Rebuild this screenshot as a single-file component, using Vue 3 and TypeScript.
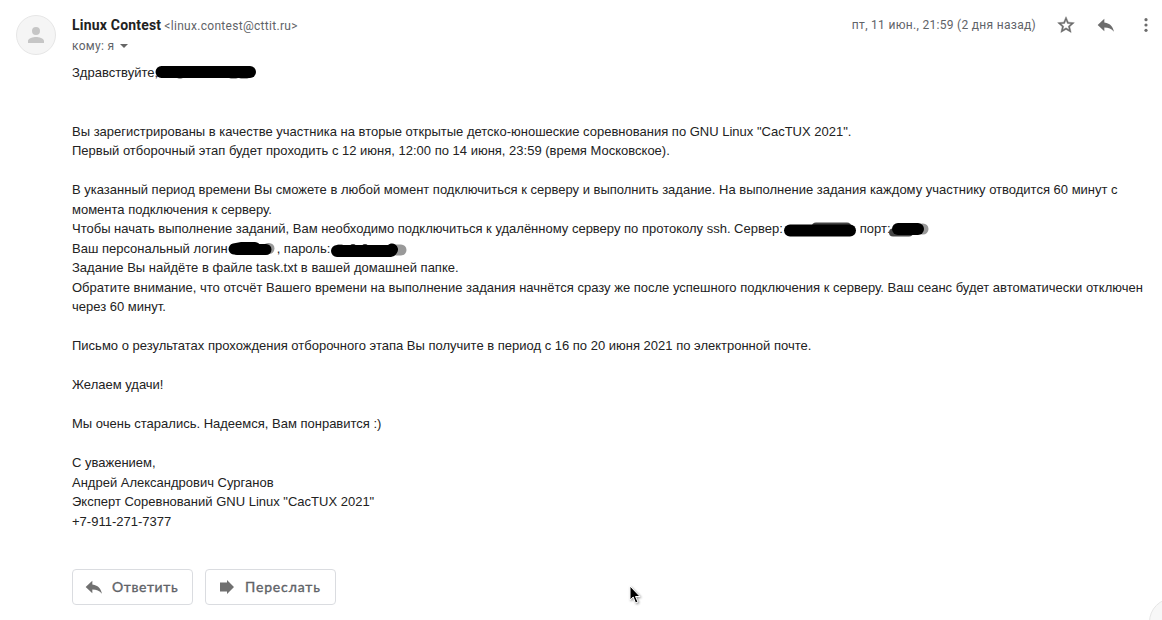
<script setup lang="ts">
import { ref } from 'vue';

const starred = ref(false);

const sender = {
  name: 'Linux Contest',
  email: '<linux.contest@cttit.ru>',
};

const signature = [
  'С уважением,',
  'Андрей Александрович Сурганов',
  'Эксперт Соревнований GNU Linux "CacTUX 2021"',
  '+7-911-271-7377',
];
</script>

<template>
  <main class="message">
    <div class="avatar">
      <svg width="24" height="24" viewBox="0 0 24 24">
        <path d="M12 12a4 4 0 1 0 0-8 4 4 0 0 0 0 8zm0 2c-2.7 0-8 1.3-8 4v2h16v-2c0-2.7-5.3-4-8-4z" />
      </svg>
    </div>

    <div class="content">
      <header class="header">
        <div class="from">
          <div class="sender">
            <span class="name">{{ sender.name }}</span>
            <span class="email">{{ sender.email }}</span>
          </div>
          <div class="recipient">
            <span>кому: я</span>
            <svg width="8" height="4" viewBox="0 0 8 4"><path d="M0 0h8L4 4z" /></svg>
          </div>
        </div>

        <div class="meta">
          <span class="date">пт, 11 июн., 21:59 (2 дня назад)</span>
          <button class="icon" aria-label="Пометить" @click="starred = !starred">
            <svg width="20" height="20" viewBox="0 0 24 24">
              <path v-if="starred" d="M12 17.27 18.18 21l-1.64-7.03L22 9.24l-7.19-.61L12 2 9.19 8.63 2 9.24l5.46 4.73L5.82 21z" />
              <path v-else class="star" d="M22 9.24l-7.19-.62L12 2 9.19 8.63 2 9.24l5.46 4.73L5.82 21 12 17.27 18.18 21l-1.63-7.03L22 9.24zM12 15.4l-3.76 2.27 1-4.28-3.32-2.88 4.38-.38L12 6.1l1.71 4.04 4.38.38-3.32 2.88 1 4.28L12 15.4z" />
            </svg>
          </button>
          <button class="icon" aria-label="Ответить">
            <svg width="20" height="20" viewBox="0 0 24 24">
              <path d="M10 9V4.500l-8 7.500 8 7.500v-4.600c5 0 8.700 1.300 11.500 5.100C20.500 14.500 17.500 10 10 9z" />
            </svg>
          </button>
          <button class="icon" aria-label="Ещё">
            <svg width="20" height="20" viewBox="0 0 20 20">
              <circle cx="10" cy="4.700" r="1.600" />
              <circle cx="10" cy="10" r="1.600" />
              <circle cx="10" cy="15.300" r="1.600" />
            </svg>
          </button>
        </div>
      </header>

      <article class="body">
        <p>
          Здравствуйте,<span class="mark"><svg class="ink hello" width="108" height="20" viewBox="0 0 108 20">
            <path class="soft" d="M10 13.500h6M26 14h2M78 14h5M88 14h6" stroke-width="5" />
            <path d="M8.500 10h88.500" stroke-width="12" />
          </svg></span>
        </p>
        <br><br>
        <p>Вы зарегистрированы в качестве участника на вторые открытые детско-юношеские соревнования по GNU Linux "CacTUX 2021".</p>
        <p>Первый отборочный этап будет проходить с 12 июня, 12:00 по 14 июня, 23:59 (время Московское).</p>
        <br>
        <p>В указанный период времени Вы сможете в любой момент подключиться к серверу и выполнить задание. На выполнение задания каждому участнику отводится 60 минут с момента подключения к серверу.</p>
        <p>
          Чтобы начать выполнение заданий, Вам необходимо подключиться к удалённому серверу по протоколу ssh. Сервер:<span class="mark server"><svg class="ink" width="78" height="20" viewBox="0 0 78 20">
            <path class="soft" d="M33 9h31" stroke-width="9" />
            <path d="M7 12.500h60" stroke-width="12" />
          </svg></span>порт:<span class="mark"><svg class="ink port" width="48" height="20" viewBox="0 0 48 20">
            <path class="faint" d="M38 10h1" stroke-width="11" />
            <path class="soft" d="M9 13.500h16" stroke-width="8" />
            <path d="M14 10h20" stroke-width="12" />
          </svg></span>
        </p>
        <p>
          Ваш персональный логин<span class="mark login"><svg class="ink" width="50" height="20" viewBox="0 0 50 20">
            <path class="faint" d="M40 10.500h1" stroke-width="11" />
            <path d="M6 11l8-1.500h13M9 11.500h29" stroke-width="11" />
          </svg></span>, пароль:<span class="mark"><svg class="ink password" width="80" height="20" viewBox="0 0 80 20">
            <path class="faint" d="M66 12h5" stroke-width="11" />
            <path class="soft" d="M8 8h4M22 7.500h2M34 7.500h2" stroke-width="3" />
            <path d="M7 13h54L62 11.500" stroke-width="12" />
          </svg></span>
        </p>
        <p>Задание Вы найдёте в файле task.txt в вашей домашней папке.</p>
        <p>Обратите внимание, что отсчёт Вашего времени на выполнение задания начнётся сразу же после успешного подключения к серверу. Ваш сеанс будет автоматически отключен через 60 минут.</p>
        <br>
        <p>Письмо о результатах прохождения отборочного этапа Вы получите в период с 16 по 20 июня 2021 по электронной почте.</p>
        <br>
        <p>Желаем удачи!</p>
        <br>
        <p>Мы очень старались. Надеемся, Вам понравится :)</p>
        <br>
        <p v-for="line in signature" :key="line">{{ line }}</p>
      </article>

      <footer class="actions">
        <button class="action reply">
          <svg width="20" height="20" viewBox="0 0 24 24">
            <path d="M10 9V4.500l-8 7.500 8 7.500v-4.600c5 0 8.700 1.300 11.500 5.100C20.500 14.500 17.500 10 10 9z" />
          </svg>
          <span>Ответить</span>
        </button>
        <button class="action forward">
          <svg width="20" height="20" viewBox="0 0 20 20">
            <path d="M3 5.500h7V3l7 7-7 7v-2.500H3z" />
          </svg>
          <span>Переслать</span>
        </button>
      </footer>
    </div>

    <div class="corner"></div>
    <svg class="cursor" width="12" height="20" viewBox="0 0 12 20">
      <path d="M1 1v14l3.200-3 2.300 6 2.500-1-2.500-5.500H11z" />
    </svg>
  </main>
</template>

<style>
body {
  background: #fff;
}
</style>

<style scoped>
.message {
  position: relative;
  box-sizing: border-box;
  width: 100%;
  height: 620px;
  padding: 15px 0 0 16px;
  display: flex;
  gap: 16px;
  overflow: hidden;
  font-family: Roboto, sans-serif;
  color: #222;
}

button {
  margin: 0;
  padding: 0;
  border: 0;
  background: none;
  font: inherit;
}

.avatar {
  box-sizing: border-box;
  flex: none;
  width: 40px;
  height: 40px;
  display: flex;
  align-items: center;
  justify-content: center;
  border: 1px solid #e6e6e6;
  border-radius: 50%;
  background: #f5f5f5;
}

.avatar svg {
  fill: #c6c6c6;
}

.content {
  flex: 1;
  min-width: 0;
}

.header {
  height: 48px;
  display: flex;
  justify-content: space-between;
}

.sender {
  display: flex;
  align-items: baseline;
  gap: 3px;
  line-height: 20px;
}

.name {
  font-size: 14px;
  font-weight: 700;
  letter-spacing: 0.2px;
}

.email,
.recipient,
.date {
  font-size: 12px;
  letter-spacing: 0.3px;
  color: #5f6368;
}

.recipient {
  display: flex;
  align-items: center;
  gap: 6px;
  line-height: 20px;
}

.recipient svg {
  fill: #666;
}

.meta {
  height: 20px;
  padding-right: 6px;
  display: flex;
  align-items: center;
  gap: 20px;
}

.date {
  line-height: 20px;
}

.icon,
.icon svg {
  display: block;
  width: 20px;
  height: 20px;
  fill: #6c6c6c;
}

.icon .star {
  stroke: #6c6c6c;
  stroke-width: 0.5;
}

.body {
  padding-right: 12px;
  font: 13px/19.5px "Liberation Sans", Arial, sans-serif;
}

.body p {
  margin: 0;
}

/* Scribbles over private details; they spill over neighbouring letters */
.mark {
  position: relative;
}

.server {
  display: inline-block;
  width: 77px;
}

.login {
  display: inline-block;
  width: 49px;
}

.ink {
  position: absolute;
  left: 0;
  bottom: -4px;
  fill: none;
  stroke: #000;
  stroke-linecap: round;
  stroke-linejoin: round;
}

.server .ink,
.login .ink {
  bottom: -5px;
}

.hello {
  left: -5px;
  bottom: -2px;
}

.port {
  left: -7px;
  bottom: -3px;
}

.password {
  bottom: -2px;
}

.soft {
  stroke: #444;
}

.faint {
  stroke: #999;
}

.actions {
  margin-top: 38px;
  display: flex;
  gap: 12px;
}

.action {
  box-sizing: border-box;
  height: 36px;
  padding-left: 11px;
  display: flex;
  align-items: center;
  gap: 8px;
  border: 1px solid #dadce0;
  border-radius: 4px;
  font: 400 14px/20px Lato, sans-serif;
  letter-spacing: 0.6px;
  -webkit-text-stroke: 0.35px #5f6368;
  color: #5f6368;
}

.action svg {
  fill: #707070;
}

.reply {
  width: 121px;
}

.forward {
  width: 131px;
}

.forward span {
  letter-spacing: 0.85px;
}

.corner {
  position: absolute;
  left: 1149px;
  top: 598px;
  width: 46px;
  height: 46px;
  border-radius: 50%;
  background: #f7f7f7;
  border: 1px solid #e6e6e6;
}

.cursor {
  position: absolute;
  left: 629px;
  top: 585px;
  fill: #000;
  stroke: #fff;
  filter: drop-shadow(1px 1px 1px rgba(0, 0, 0, 0.4));
}
</style>
